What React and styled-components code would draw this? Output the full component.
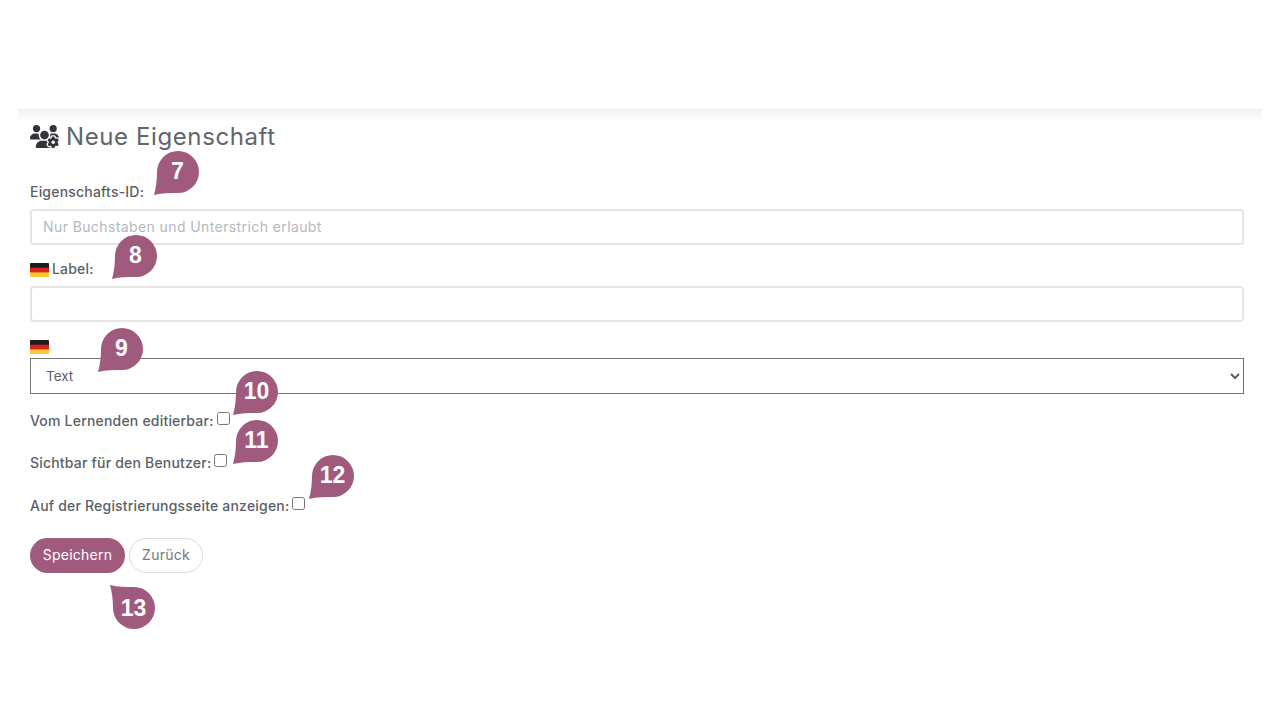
import styled, { createGlobalStyle } from "styled-components";
import { FaUsersGear } from "react-icons/fa6";

const GlobalStyle = createGlobalStyle`
  body {
    margin: 0;
    background: #fff;
    font-family: Inter, "Open Sans", sans-serif;
    color: #5a5f66;
  }
`;

const markers = [
  { num: 7, x: 153, y: 150 },
  { num: 8, x: 111, y: 234 },
  { num: 9, x: 97, y: 327 },
  { num: 10, x: 232, y: 370 },
  { num: 11, x: 232, y: 419 },
  { num: 12, x: 308, y: 454 },
  { num: 13, x: 109, y: 584, down: true },
];

const Flag = () => (
  <FlagIcon viewBox="0 0 19 14">
    <rect width="19" height="14" rx="1" fill="#fdc92f" />
    <path d="M0 1a1 1 0 0 1 1-1h17a1 1 0 0 1 1 1v4H0z" fill="#1c1c1c" />
    <rect y="4.7" width="19" height="4.7" fill="#d8231f" />
  </FlagIcon>
);

const App = () => {
  return (
    <Page>
      <GlobalStyle />
      <Panel>
        <Title>
          <FaUsersGear size={29} color="#33333a" />
          Neue Eigenschaft
        </Title>
        <Label htmlFor="prop-id" $height={46}>
          Eigenschafts-ID:
        </Label>
        <Input id="prop-id" placeholder="Nur Buchstaben und Unterstrich erlaubt" />
        <Label htmlFor="prop-label" $height={41}>
          <Flag />
          Label:
        </Label>
        <Input id="prop-label" />
        <FlagRow>
          <Flag />
        </FlagRow>
        <Select defaultValue="Text">
          <option>Text</option>
        </Select>
        <CheckRow $height={44}>
          Vom Lernenden editierbar:
          <Check type="checkbox" />
        </CheckRow>
        <CheckRow $height={42}>
          Sichtbar für den Benutzer:
          <Check type="checkbox" />
        </CheckRow>
        <CheckRow $height={43}>
          Auf der Registrierungsseite anzeigen:
          <Check type="checkbox" />
        </CheckRow>
        <Buttons>
          <SaveButton>Speichern</SaveButton>
          <BackButton>Zurück</BackButton>
        </Buttons>
      </Panel>
      {markers.map((item) => (
        <Marker key={item.num} $x={item.x} $y={item.y} $down={item.down}>
          <MarkerShape viewBox="0 0 46 46" $down={item.down}>
            <path d="M1 45C3 38 4 30 4 22A21 21 0 1 1 25 43C17 43 9 43 1 45Z" />
          </MarkerShape>
          <MarkerNum>{item.num}</MarkerNum>
        </Marker>
      ))}
    </Page>
  );
};

export default App;

const Page = styled.div`
  position: relative;
  width: 1280px;
  height: 720px;
  padding-top: 109px;
  box-sizing: border-box;
  overflow: hidden;
`;

const Panel = styled.div`
  margin: 0 18px;
  padding: 0 18px 0 12px;
  background: linear-gradient(#f1f1f2, #fff 12px);
`;

const Title = styled.h2`
  display: flex;
  align-items: center;
  gap: 7px;
  height: 54px;
  margin: 0;
  font-size: 24px;
  font-weight: 400;
  letter-spacing: 0.6px;
  color: #5f6569;
`;

const Label = styled.label`
  display: flex;
  align-items: flex-end;
  gap: 3px;
  height: ${(props) => props.$height}px;
  padding-bottom: 9px;
  box-sizing: border-box;
  font-size: 14px;
  font-weight: 450;
  letter-spacing: 0.2px;
  line-height: 17px;
`;

const FlagIcon = styled.svg`
  width: 19px;
  height: 14px;
`;

const Input = styled.input`
  display: block;
  width: 100%;
  height: 36px;
  padding: 0 11px 2px;
  box-sizing: border-box;
  border: 2px solid #e3e4e6;
  border-radius: 4px;
  font-family: inherit;
  font-size: 14px;
  color: #5a5f66;
  &::placeholder {
    color: #b5b8bd;
    letter-spacing: 0.4px;
  }
`;

const FlagRow = styled.div`
  display: flex;
  align-items: flex-end;
  height: 36px;
  padding-bottom: 4px;
  box-sizing: border-box;
`;

const Select = styled.select`
  display: block;
  width: 100%;
  height: 36px;
  padding: 0 11px;
  box-sizing: border-box;
  background: #fff;
  border: 1px solid #767676;
  border-radius: 0;
  font-family: inherit;
  font-size: 13.5px;
  color: #5a5f66;
`;

const CheckRow = styled.label`
  display: flex;
  align-items: flex-end;
  height: ${(props) => props.$height}px;
  padding-bottom: 9px;
  box-sizing: border-box;
  font-size: 14px;
  font-weight: 450;
  letter-spacing: 0.2px;
  line-height: 17px;
`;

const Check = styled.input`
  width: 13px;
  height: 13px;
  margin: 0 0 4px 3px;
`;

const Buttons = styled.div`
  display: flex;
  gap: 4px;
  margin-top: 15px;
`;

const SaveButton = styled.button`
  width: 95px;
  height: 35px;
  padding: 0 0 2px;
  background: #a05a7e;
  border: 0;
  border-radius: 18px;
  font-family: inherit;
  font-size: 14px;
  letter-spacing: 0.25px;
  color: #fff;
`;

const BackButton = styled.button`
  width: 74px;
  height: 35px;
  padding: 0 0 2px;
  background: #fff;
  border: 1px solid #dcdcde;
  border-radius: 18px;
  font-family: inherit;
  font-size: 14px;
  letter-spacing: 0.25px;
  color: #75787e;
`;

const Marker = styled.div`
  position: absolute;
  left: ${(props) => props.$x}px;
  top: ${(props) => props.$y}px;
  display: flex;
  align-items: center;
  justify-content: center;
  width: 46px;
  height: 46px;
  padding: ${(props) => (props.$down ? "2px 0 0 3px" : "0 0 4px 3px")};
  box-sizing: border-box;
`;

const MarkerShape = styled.svg`
  position: absolute;
  inset: 0;
  fill: #a05a7e;
  transform: ${(props) => (props.$down ? "scaleY(-1)" : "none")};
`;

const MarkerNum = styled.span`
  position: relative;
  font-family: "Liberation Sans", Arial, sans-serif;
  font-size: 23px;
  font-weight: 700;
  color: #fff;
`;
